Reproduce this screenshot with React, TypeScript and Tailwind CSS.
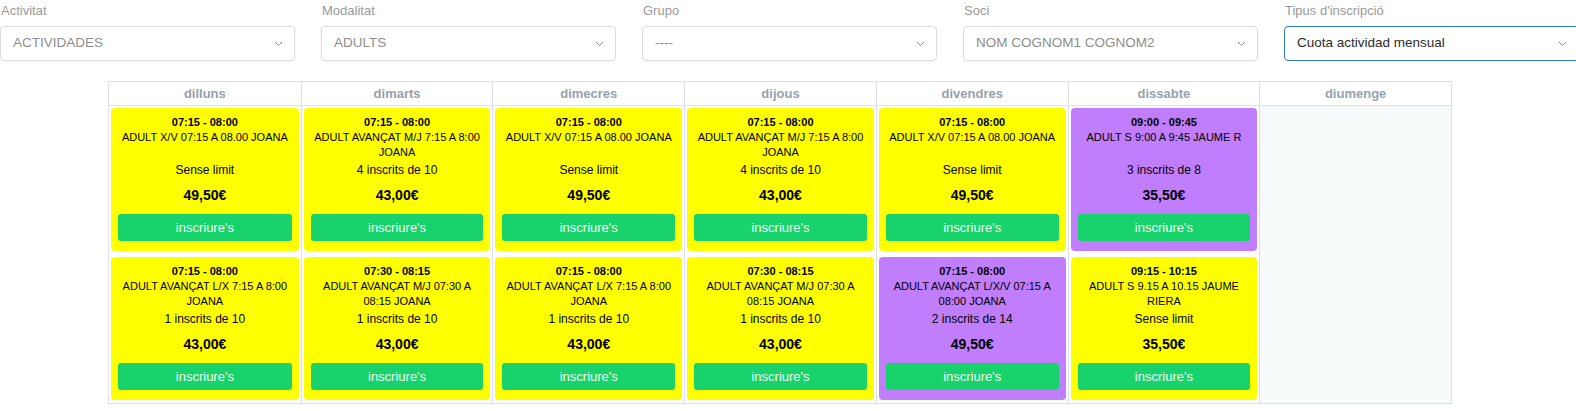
import { FC } from 'react';

type Slot = {
  time: string;
  title: string;
  places: string;
  price: string;
  purple?: boolean;
};

const filters = [
  { label: 'Activitat', value: 'ACTIVIDADES' },
  { label: 'Modalitat', value: 'ADULTS' },
  { label: 'Grupo', value: '----' },
  { label: 'Soci', value: 'NOM COGNOM1 COGNOM2' },
  { label: "Tipus d'inscripció", value: 'Cuota actividad mensual', active: true },
];

const days: { name: string; slots: Slot[] }[] = [
  {
    name: 'dilluns',
    slots: [
      { time: '07:15 - 08:00', title: 'ADULT X/V 07:15 A 08.00 JOANA', places: 'Sense limit', price: '49,50€' },
      { time: '07:15 - 08:00', title: 'ADULT AVANÇAT L/X 7:15 A 8:00 JOANA', places: '1 inscrits de 10', price: '43,00€' },
    ],
  },
  {
    name: 'dimarts',
    slots: [
      { time: '07:15 - 08:00', title: 'ADULT AVANÇAT M/J 7:15 A 8:00 JOANA', places: '4 inscrits de 10', price: '43,00€' },
      { time: '07:30 - 08:15', title: 'ADULT AVANÇAT M/J 07:30 A 08:15 JOANA', places: '1 inscrits de 10', price: '43,00€' },
    ],
  },
  {
    name: 'dimecres',
    slots: [
      { time: '07:15 - 08:00', title: 'ADULT X/V 07:15 A 08.00 JOANA', places: 'Sense limit', price: '49,50€' },
      { time: '07:15 - 08:00', title: 'ADULT AVANÇAT L/X 7:15 A 8:00 JOANA', places: '1 inscrits de 10', price: '43,00€' },
    ],
  },
  {
    name: 'dijous',
    slots: [
      { time: '07:15 - 08:00', title: 'ADULT AVANÇAT M/J 7:15 A 8:00 JOANA', places: '4 inscrits de 10', price: '43,00€' },
      { time: '07:30 - 08:15', title: 'ADULT AVANÇAT M/J 07:30 A 08:15 JOANA', places: '1 inscrits de 10', price: '43,00€' },
    ],
  },
  {
    name: 'divendres',
    slots: [
      { time: '07:15 - 08:00', title: 'ADULT X/V 07:15 A 08.00 JOANA', places: 'Sense limit', price: '49,50€' },
      { time: '07:15 - 08:00', title: 'ADULT AVANÇAT L/X/V 07:15 A 08:00 JOANA', places: '2 inscrits de 14', price: '49,50€', purple: true },
    ],
  },
  {
    name: 'dissabte',
    slots: [
      { time: '09:00 - 09:45', title: 'ADULT S 9:00 A 9:45 JAUME R', places: '3 inscrits de 8', price: '35,50€', purple: true },
      { time: '09:15 - 10:15', title: 'ADULT S 9.15 A 10.15 JAUME RIERA', places: 'Sense limit', price: '35,50€' },
    ],
  },
  { name: 'diumenge', slots: [] },
];

const Chevron = () => (
  <svg width="9" height="6" viewBox="0 0 9 6" fill="none" className="shrink-0">
    <path d="M1 1l3.5 3.5L8 1" stroke="#8c8c8c" strokeWidth="1" />
  </svg>
);

const SlotCard: FC<{ slot: Slot }> = ({ slot }) => (
  <div
    className={`mx-[2px] flex flex-col rounded-[4px] px-[7px] pt-[7px] pb-[10px] text-center text-black ${
      slot.purple ? 'bg-[#c07dfc]' : 'bg-[#ffff00]'
    }`}
  >
    <div className="text-[11px] leading-[15px] font-bold">{slot.time}</div>
    <div className="h-[30px] text-[11px] leading-[15px]">{slot.title}</div>
    <div className="text-[12px] leading-[20px]">{slot.places}</div>
    <div className="mt-[5px] text-[14px] leading-[20px] font-bold">{slot.price}</div>
    <button
      type="button"
      className="mt-[9px] h-[27px] rounded-[3px] bg-[#18d36b] text-[13px] text-[#effff4]"
    >
      inscriure's
    </button>
  </div>
);

export default function App() {
  return (
    <div className="h-[411px] w-[1576px] overflow-hidden bg-white font-['Liberation_Sans',Arial,sans-serif]">
      <div className="grid w-[1601px] grid-cols-[repeat(5,295px)] gap-x-[26px] pt-[1px]">
        {filters.map((f) => (
          <div key={f.label} className="flex flex-col gap-[5px]">
            <label className="pl-[1px] text-[13px] leading-[20px] text-[#9a9a9a]">{f.label}</label>
            <div
              className={`flex h-[35px] items-center justify-between rounded-[4px] border pr-[11px] pl-[12px] text-[13.5px] ${
                f.active
                  ? 'border-[#2f7db6] text-[#2b2b2b]'
                  : 'border-[#dcdcdc] text-[#8e8e8e] shadow-[0_1px_2px_rgba(0,0,0,0.04)]'
              }`}
            >
              <span>{f.value}</span>
              <Chevron />
            </div>
          </div>
        ))}
      </div>

      <div className="mt-[20px] ml-[108px] grid w-[1344px] grid-cols-7 border border-[#dde1e6]">
        {days.map((d, i) => (
          <div
            key={d.name}
            className={`flex flex-col ${i > 0 ? 'border-l border-[#dde1e6]' : ''}`}
          >
            <div className="h-[24px] border-b border-[#dde1e6] text-center text-[13px] leading-[23px] font-bold text-[#98a1ab]">
              {d.name}
            </div>
            <div
              className={`flex h-[297px] flex-col gap-[6px] pt-[2px] ${
                d.slots.length === 0 ? 'bg-[#f8fbfc]' : ''
              }`}
            >
              {d.slots.map((s, j) => (
                <SlotCard key={j} slot={s} />
              ))}
            </div>
          </div>
        ))}
      </div>
    </div>
  );
}
